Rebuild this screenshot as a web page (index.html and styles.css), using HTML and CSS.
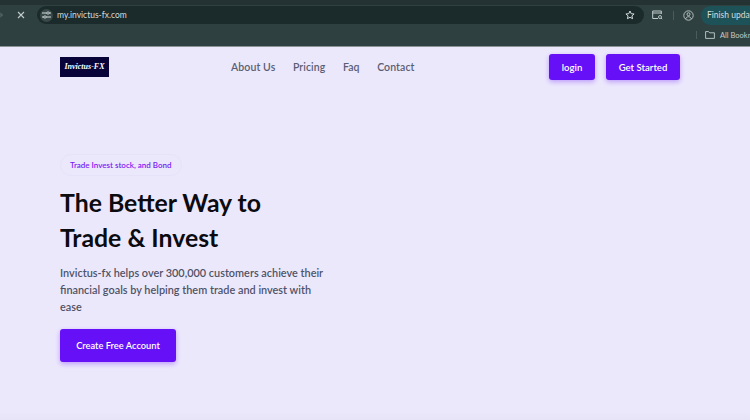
FILE: index.html
```html
<!DOCTYPE html>
<html lang="en">
<head>
  <meta charset="UTF-8" />
  <title>Invictus-FX</title>
  <link rel="stylesheet" href="styles.css">
</head>
<body>
  <div class="chrome">
    <div class="tabstrip"></div>
    <div class="toolbar">
      <svg class="fwd" width="6" height="8" viewBox="0 0 6 8"><path d="M0 4h4M2 1.500 4.500 4 2 6.500" fill="none" stroke="#5d6c6c" stroke-width="1"/></svg>
      <svg class="stop" width="8" height="8" viewBox="0 0 8 8"><path d="M1 1l6 6M7 1 1 7" fill="none" stroke="#c3cccc" stroke-width="1.100"/></svg>
      <div class="omnibox">
        <span class="tune">
          <svg width="9" height="8" viewBox="0 0 9 8"><path d="M0 2h5M7 2h2M0 6h2M4 6h5" fill="none" stroke="#d5dddd" stroke-width="1"/><circle cx="6" cy="2" r="1.200" fill="none" stroke="#d5dddd" stroke-width=".8"/><circle cx="3" cy="6" r="1.200" fill="none" stroke="#d5dddd" stroke-width=".8"/></svg>
        </span>
        <span class="url">my.invictus-fx.com</span>
        <svg class="star" width="10" height="10" viewBox="0 0 10 10"><path d="M5 1l1.200 2.700 2.900.3-2.200 1.900.7 2.800L5 7.300 2.400 8.700l.7-2.800L.9 4l2.900-.3z" fill="none" stroke="#d5dddd" stroke-width="1"/></svg>
      </div>
      <svg class="tool-icon" width="11" height="10" viewBox="0 0 11 10"><path d="M6 8.500H.7V1h8.600v3M.7 3h8.600" fill="none" stroke="#c3cccc" stroke-width="1"/><circle cx="8" cy="7" r="1.500" fill="none" stroke="#c3cccc" stroke-width=".9"/><path d="M9 8l1.200 1.200" stroke="#c3cccc" stroke-width=".9"/></svg>
      <span class="divider"></span>
      <svg class="tool-icon" width="11" height="11" viewBox="0 0 11 11"><circle cx="5.500" cy="5.500" r="4.700" fill="none" stroke="#c3cccc" stroke-width=".9"/><circle cx="5.500" cy="4.200" r="1.500" fill="none" stroke="#c3cccc" stroke-width=".9"/><path d="M2.600 9c.6-1.600 1.600-2.300 2.900-2.300S7.800 7.400 8.400 9" fill="none" stroke="#c3cccc" stroke-width=".9"/></svg>
      <span class="update">Finish update</span>
    </div>
    <div class="bookmarks">
      <span class="divider short"></span>
      <svg class="folder" width="10" height="8" viewBox="0 0 10 8"><path d="M.6 7.400V.6h3l1 1.200h4.800v5.600z" fill="none" stroke="#c3cccc" stroke-width=".9"/></svg>
      <span class="bm-label">All Bookmarks</span>
    </div>
  </div>

  <div class="page">
    <nav class="nav">
      <div class="logo">Invictus-FX</div>
      <div class="links">
        <a>About Us</a>
        <a>Pricing</a>
        <a>Faq</a>
        <a>Contact</a>
      </div>
      <div class="actions">
        <button class="btn login">login</button>
        <button class="btn started">Get Started</button>
      </div>
    </nav>

    <section class="hero">
      <span class="pill">Trade Invest stock, and Bond</span>
      <h1>The Better Way to<br>Trade &amp; Invest</h1>
      <p>Invictus-fx helps over 300,000 customers achieve their financial goals by helping them trade and invest with ease</p>
      <button class="btn create">Create Free Account</button>
    </section>
  </div>
</body>
</html>
```

FILE: styles.css
```css
* {
  margin: 0;
  padding: 0;
  box-sizing: border-box;
}

html, body {
  width: 750px;
  height: 420px;
  overflow: hidden;
}

body {
  font-family: 'Lato', 'Open Sans', sans-serif;
  background: linear-gradient(#ece8fc 98%, #e8e4f8);
}

.chrome {
  height: 47px;
  background: #2f4041;
  border-bottom: 1px solid #8b9494;
  color: #d5dddd;
}

.tabstrip {
  height: 5px;
  background: #243233;
}

.toolbar {
  height: 20px;
  display: flex;
  align-items: center;
  overflow: hidden;
}

.fwd {
  margin-left: -2px;
  flex-shrink: 0;
}

.stop {
  margin-left: 13px;
  flex-shrink: 0;
}

.omnibox {
  width: 607px;
  height: 18px;
  margin-left: 12px;
  padding: 0 9px 0 3px;
  display: flex;
  align-items: center;
  flex-shrink: 0;
  background: #1b2a2b;
  border-radius: 9px;
}

.tune {
  width: 13px;
  height: 13px;
  border-radius: 50%;
  background: #384748;
  display: flex;
  align-items: center;
  justify-content: center;
}

.url {
  flex: 1;
  margin-left: 4px;
  font-size: 8.500px;
  color: #d5dddd;
}

.tool-icon {
  margin-left: 8px;
  flex-shrink: 0;
}

.divider {
  width: 1px;
  height: 9px;
  margin-left: 10px;
  background: #4c5b5c;
  flex-shrink: 0;
}

.divider + .tool-icon {
  margin-left: 9px;
}

.update {
  margin-left: 7px;
  padding-left: 6px;
  height: 19px;
  flex: 1;
  line-height: 19px;
  white-space: nowrap;
  font-size: 8.500px;
  overflow: hidden;
  background: #1d5258;
  border-radius: 10px 0 0 10px;
}

.bookmarks {
  height: 20px;
  display: flex;
  align-items: center;
  padding-left: 696px;
  white-space: nowrap;
  overflow: hidden;
}

.divider.short {
  height: 8px;
  margin: 0 8px 0 0;
}

.folder {
  flex-shrink: 0;
}

.bm-label {
  margin-left: 5px;
  font-size: 7.500px;
  color: #c3cccc;
  flex-shrink: 0;
}

.page {
  padding: 0 70px 0 60px;
}

.nav {
  height: 40px;
  display: flex;
  align-items: center;
}

.logo {
  width: 49px;
  height: 20px;
  background: #08043a;
  color: #fff;
  font-family: 'Liberation Serif', serif;
  font-style: italic;
  font-weight: 700;
  font-size: 8px;
  line-height: 20px;
  text-align: center;
}

.links {
  display: flex;
  gap: 17.500px;
  margin-left: 122px;
  font-size: 10.500px;
  font-weight: 600;
  letter-spacing: 0.1px;
  color: #5a5e73;
}

.actions {
  display: flex;
  gap: 11px;
  margin-left: auto;
}

.btn {
  border: none;
  border-radius: 3px;
  background: #6610f8;
  color: #fff;
  font-family: inherit;
  font-weight: 600;
  font-size: 9.600px;
  box-shadow: 0 2px 5px rgba(102, 16, 248, 0.35);
}

.login {
  width: 46px;
  height: 26px;
}

.started {
  width: 74px;
  height: 26px;
}

.hero {
  margin-top: 67px;
  display: flex;
  flex-direction: column;
  align-items: flex-start;
}

.pill {
  height: 22px;
  padding: 0 9px;
  line-height: 21px;
  border-radius: 11px;
  border: 1px solid #e6e2f8;
  font-size: 8px;
  font-weight: 600;
  color: #7a22f5;
}

h1 {
  margin-top: 9px;
  font-size: 24.800px;
  line-height: 35px;
  font-weight: 700;
  color: #0b0b10;
}

p {
  width: 270px;
  margin-top: 9px;
  font-size: 10.900px;
  line-height: 17px;
  font-weight: 600;
  color: #4f5366;
}

.create {
  width: 116px;
  height: 33px;
  margin-top: 14px;
  font-size: 9.300px;
}
```
